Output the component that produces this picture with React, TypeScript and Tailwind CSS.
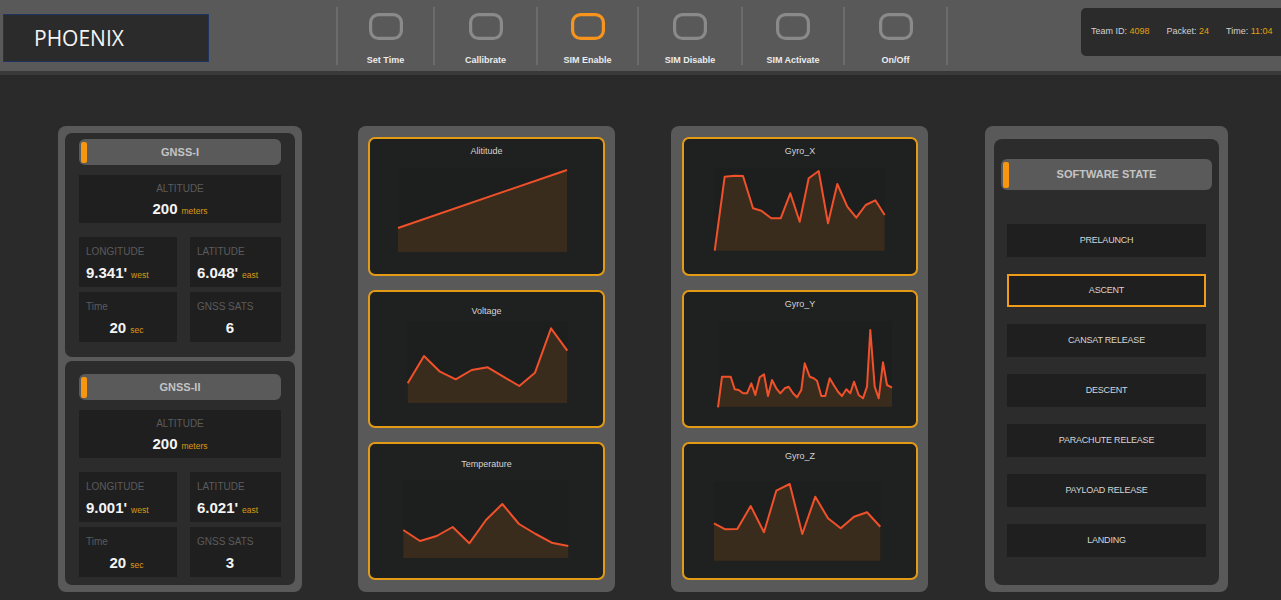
import React from "react";

type Pt = [number, number];

const buttons = [
  { label: "Set Time", w: "w-[95px]" },
  { label: "Callibrate", w: "w-[101px]" },
  { label: "SIM Enable", w: "w-[99px]", active: true },
  { label: "SIM Disable", w: "w-[102px]" },
  { label: "SIM Activate", w: "w-[100px]" },
  { label: "On/Off", w: "w-[101px]" },
];

const gnss = [
  { title: "GNSS-I", pt: "pt-[6px]", alt: "200", lon: "9.341'", lat: "6.048'", time: "20", sats: "6" },
  { title: "GNSS-II", pt: "pt-[13px]", alt: "200", lon: "9.001'", lat: "6.021'", time: "20", sats: "3" },
];

const states = ["PRELAUNCH", "ASCENT", "CANSAT RELEASE", "DESCENT", "PARACHUTE RELEASE", "PAYLOAD RELEASE", "LANDING"];

// chart points are in page pixels, the svg viewBox maps onto the card's own box
const leftCharts = [
  {
    title: "Alititude", titlePt: "pt-[6px]", h: "h-[139px]", x: 370, y: 139, ch: 135, plotTop: 168, bottom: 252,
    pts: [[398, 228], [567, 170]] as Pt[],
  },
  {
    title: "Voltage", titlePt: "pt-[13px]", h: "h-[138px]", x: 370, y: 292, ch: 134, plotTop: 321, bottom: 403,
    pts: [[407.7, 383.3], [424, 356], [440, 371.7], [455.7, 379.3], [471.7, 370], [487.7, 367.3], [503.3, 376.7], [519.3, 386], [535, 372.7], [551, 328.3], [567.3, 350.7]] as Pt[],
  },
  {
    title: "Temperature", titlePt: "pt-[14px]", h: "h-[138px]", x: 370, y: 444, ch: 134, plotTop: 480, bottom: 558,
    pts: [[403.3, 530], [420, 541], [436.7, 536], [452.7, 527], [469.3, 543.3], [486, 520], [502.3, 504], [519, 524], [535.7, 534], [551.7, 542.7], [568.3, 546]] as Pt[],
  },
];

const gyroCharts = [
  {
    title: "Gyro_X", titlePt: "pt-[6px]", h: "h-[139px]", x: 684, y: 139, ch: 135, plotTop: 168, bottom: 250.7,
    pts: [[714.7, 250.7], [724.7, 176.7], [734.7, 175.7], [743, 176], [753, 208.3], [761.3, 210.7], [771.3, 218.3], [780.7, 218.3], [790.3, 193.3], [799.7, 221.7], [808.7, 178.3], [818.7, 171], [828, 223.3], [837.3, 184], [847.3, 206.7], [856.3, 217.7], [865.7, 205], [875.3, 200.3], [884.7, 215]] as Pt[],
  },
  {
    title: "Gyro_Y", titlePt: "pt-[6px]", h: "h-[138px]", x: 684, y: 292, ch: 134, plotTop: 321, bottom: 406.7,
    pts: [[718, 407.3], [722, 376.7], [730.7, 376.7], [734.7, 389.3], [738.7, 390], [743, 393.3], [747, 393.3], [751.3, 383.3], [755.3, 395], [759.7, 377.3], [764, 374.3], [768, 396], [772, 380], [776.3, 388.3], [780.3, 393.3], [784.7, 388.3], [788.7, 386.7], [793, 393.3], [797, 397.3], [801.3, 390], [804.7, 363.3], [809.7, 376.7], [813.7, 378.3], [817, 380.7], [821.3, 396], [825.3, 396], [829.7, 378.3], [833.7, 385], [838, 391.7], [842, 396], [846.3, 389.3], [850.3, 393.3], [854, 381.7], [858.7, 395], [863, 398.3], [867, 386.7], [870.3, 330], [874.7, 386.7], [878.7, 398.3], [883, 362.3], [887, 385], [892, 387.7]] as Pt[],
  },
  {
    title: "Gyro_Z", titlePt: "pt-[6px]", h: "h-[138px]", x: 684, y: 444, ch: 134, plotTop: 481, bottom: 560.7,
    pts: [[714, 523.3], [725.3, 529.3], [737.3, 529], [750.7, 506], [764, 532.3], [776.3, 490.7], [789.7, 484], [802.3, 534], [815.3, 496.7], [828, 518.3], [840.7, 528.3], [854, 516.7], [867, 512.3], [880.3, 526.7]] as Pt[],
  },
];

function ButtonIcon({ active }: { active?: boolean }) {
  return (
    <svg width="34" height="27" viewBox="0 0 34 27">
      <rect x="1.6" y="1.6" width="30.8" height="23.8" rx="8" fill="none" stroke={active ? "#f7941d" : "#8a8a8a"} strokeWidth="3.2" />
    </svg>
  );
}

function Sep() {
  return <div className="mt-[7px] h-[58px] w-[2px] bg-[#6c6c6c]" />;
}

function PanelHeader({ title, h }: { title: string; h: string }) {
  return (
    <div className={`flex ${h} items-center rounded-[6px] bg-[#5a5a5a] pl-[2px]`}>
      <div className="h-[calc(100%-5px)] w-[6px] rounded-[2px] bg-[#f7960f]" />
      <div className="flex-1 pr-[8px] text-center text-[11px] font-bold text-[#c4c4c4]">{title}</div>
    </div>
  );
}

function Unit({ children }: { children: React.ReactNode }) {
  return <span className="text-[8.5px] text-[#dc9a12]">{children}</span>;
}

function GnssCard({ g }: { g: (typeof gnss)[number] }) {
  return (
    <div className={`h-[224px] rounded-[7px] bg-[#2c2c2c] px-[14px] ${g.pt}`}>
      <PanelHeader title={g.title} h="h-[26px]" />

      <div className="mt-[10px] flex h-[48px] flex-col items-center bg-[#1f1f1f] pt-[8px]">
        <span className="text-[10px] leading-[12px] text-[#5b5b5b]">ALTITUDE</span>
        <div className="mt-[5px] flex items-baseline gap-[4px]">
          <span className="text-[15px] font-bold leading-[18px] text-[#f4f4f4]">{g.alt}</span>
          <Unit>meters</Unit>
        </div>
      </div>

      <div className="mt-[14px] flex gap-[13px]">
        <div className="h-[50px] w-[98px] bg-[#1f1f1f] px-[7px] pt-[9px]">
          <div className="text-[10px] leading-[12px] text-[#5b5b5b]">LONGITUDE</div>
          <div className="mt-[6px] flex items-baseline gap-[4px]">
            <span className="text-[15px] font-bold leading-[18px] text-[#f4f4f4]">{g.lon}</span>
            <Unit>west</Unit>
          </div>
        </div>
        <div className="h-[50px] w-[91px] bg-[#1f1f1f] px-[7px] pt-[9px]">
          <div className="text-[10px] leading-[12px] text-[#5b5b5b]">LATITUDE</div>
          <div className="mt-[6px] flex items-baseline gap-[4px]">
            <span className="text-[15px] font-bold leading-[18px] text-[#f4f4f4]">{g.lat}</span>
            <Unit>east</Unit>
          </div>
        </div>
      </div>

      <div className="mt-[5px] flex gap-[13px]">
        <div className="h-[50px] w-[98px] bg-[#1f1f1f] px-[7px] pt-[9px]">
          <div className="text-[10px] leading-[12px] text-[#5b5b5b]">Time</div>
          <div className="mt-[6px] flex items-baseline justify-center gap-[4px] pr-[3px]">
            <span className="text-[15px] font-bold leading-[18px] text-[#f4f4f4]">{g.time}</span>
            <Unit>sec</Unit>
          </div>
        </div>
        <div className="h-[50px] w-[91px] bg-[#1f1f1f] px-[7px] pt-[9px]">
          <div className="text-[10px] leading-[12px] text-[#5b5b5b]">GNSS SATS</div>
          <div className="mt-[6px] flex justify-center pr-[11px]">
            <span className="text-[15px] font-bold leading-[18px] text-[#f4f4f4]">{g.sats}</span>
          </div>
        </div>
      </div>
    </div>
  );
}

function ChartCard({ c, w }: { c: (typeof leftCharts)[number]; w: number }) {
  const line = "M" + c.pts.map((p) => `${p[0]},${p[1]}`).join(" L");
  const first = c.pts[0];
  const last = c.pts[c.pts.length - 1];
  const area = `${line} L${last[0]},${c.bottom} L${first[0]},${c.bottom} Z`;
  const svgH = c.ch - 26;

  return (
    <div className={`flex ${c.h} flex-col rounded-[7px] border-2 border-[#e39b16] bg-[#1f2020]`}>
      <div className={`h-[26px] ${c.titlePt} text-center text-[9px] leading-[12px] text-[#d4d4d4]`}>{c.title}</div>
      <svg width={w} height={svgH} viewBox={`${c.x} ${c.y + 26} ${w} ${svgH}`} preserveAspectRatio="none">
        <rect x={first[0]} y={c.plotTop} width={last[0] - first[0]} height={c.bottom - c.plotTop} fill="#1d1e1e" />
        <path d={area} fill="#3a2c1d" />
        <path d={line} fill="none" stroke="#f0512a" strokeWidth="2" strokeLinejoin="round" />
      </svg>
    </div>
  );
}

export default function App() {
  return (
    <div className="min-h-screen w-[1281px] overflow-hidden bg-[#2a2a2a] font-['Liberation_Sans',Arial,sans-serif]">
      {/* Top bar */}
      <header className="flex h-[75px] border-b-4 border-[#393939] bg-[#595959]">
        <div className="ml-[3px] mt-[14px] flex h-[48px] w-[206px] items-center border border-[#1d3560] bg-[#2b2b2b] pl-[30px]">
          <span className="font-['Open_Sans',sans-serif] text-[21px] leading-none text-[#f4f4f4]">PHOENIX</span>
        </div>

        <div className="ml-[127px] flex">
          <Sep />
          {buttons.map((b) => (
            <React.Fragment key={b.label}>
              <div className={`flex ${b.w} flex-col items-center pt-[13px]`}>
                <ButtonIcon active={b.active} />
                <span className="mt-[14px] text-[9px] font-bold leading-[12px] text-[#ececec]">{b.label}</span>
              </div>
              <Sep />
            </React.Fragment>
          ))}
        </div>

        <div className="ml-auto mt-[8px] flex h-[48px] w-[200px] items-center gap-[17px] rounded-l-[5px] bg-[#2b2b2b] pl-[10px] text-[9px] text-[#d2d2d2]">
          <span>
            Team ID: <span className="text-[#e0a010]">4098</span>
          </span>
          <span>
            Packet: <span className="text-[#e0a010]">24</span>
          </span>
          <span>
            Time: <span className="text-[#e0a010]">11:04</span>
          </span>
        </div>
      </header>

      {/* Panels */}
      <main className="flex pl-[58px] pt-[51px]">
        <div className="flex h-[466px] w-[244px] flex-col gap-[4px] rounded-[8px] bg-[#595959] p-[7px]">
          {gnss.map((g) => (
            <GnssCard key={g.title} g={g} />
          ))}
        </div>

        <div className="ml-[56px] flex h-[466px] w-[257px] flex-col gap-[14px] rounded-[8px] bg-[#595959] px-[10px] pt-[11px]">
          {leftCharts.map((c) => (
            <ChartCard key={c.title} c={c} w={233} />
          ))}
        </div>

        <div className="ml-[56px] flex h-[466px] w-[257px] flex-col gap-[14px] rounded-[8px] bg-[#595959] pl-[11px] pr-[10px] pt-[11px]">
          {gyroCharts.map((c) => (
            <ChartCard key={c.title} c={c} w={232} />
          ))}
        </div>

        <div className="ml-[57px] h-[466px] w-[243px] rounded-[8px] bg-[#595959] px-[9px] pb-[7px] pt-[13px]">
          <div className="h-full rounded-[8px] bg-[#2c2c2c] px-[7px] pt-[20px]">
            <PanelHeader title="SOFTWARE STATE" h="h-[31px]" />
            <div className="mt-[34px] flex flex-col gap-[17px] px-[6px]">
              {states.map((s) => (
                <div
                  key={s}
                  className={`flex h-[33px] items-center justify-center bg-[#1f1f1f] text-[9px] tracking-[-0.2px] text-[#d6d6d6] ${
                    s === "ASCENT" ? "border-2 border-[#f09c19]" : ""
                  }`}
                >
                  {s}
                </div>
              ))}
            </div>
          </div>
        </div>
      </main>
    </div>
  );
}
